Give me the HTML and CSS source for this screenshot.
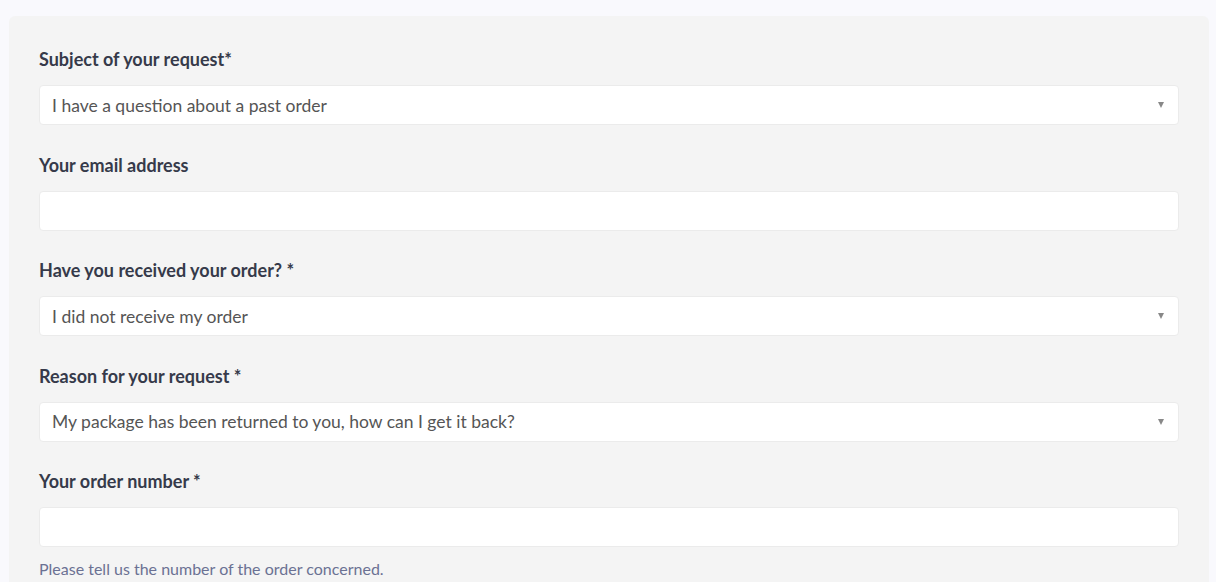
FILE: index.html
```html
<!DOCTYPE html>
<html lang="en">
<head>
    <meta charset="UTF-8">
    <meta name="viewport" content="width=device-width, initial-scale=1.0">
    <title>Contact us</title>
    <link rel="stylesheet" href="styles.css">
</head>
<body>

<div class="card">
    <form class="request-form">
        <div class="field">
            <label for="subject">Subject of your request*</label>
            <div class="select">
                <span>I have a question about a past order</span>
                <span class="arrow"></span>
            </div>
        </div>

        <div class="field">
            <label for="email">Your email address</label>
            <input type="email" id="email">
        </div>

        <div class="field">
            <label for="received">Have you received your order? *</label>
            <div class="select">
                <span>I did not receive my order</span>
                <span class="arrow"></span>
            </div>
        </div>

        <div class="field">
            <label for="reason">Reason for your request *</label>
            <div class="select">
                <span>My package has been returned to you, how can I get it back?</span>
                <span class="arrow"></span>
            </div>
        </div>

        <div class="field">
            <label for="order">Your order number *</label>
            <input type="text" id="order">
            <p class="hint">Please tell us the number of the order concerned.</p>
        </div>
    </form>
</div>

</body>
</html>
```

FILE: styles.css
```css
body {
    font-family: Lato, "Open Sans", sans-serif;
    margin: 0;
    padding: 16px 7px 0 9px;
    background-color: #f9f9fd;
}
.card {
    background-color: #f4f4f4;
    border-radius: 6px;
    padding: 31px 30px 30px 30px;
    min-height: 600px;
}
.field {
    margin-bottom: 27.5px;
}
label {
    display: block;
    font-size: 18px;
    font-weight: 700;
    line-height: 24px;
    color: #363a4a;
    margin-bottom: 14px;
}
input,
.select {
    box-sizing: border-box;
    width: 100%;
    height: 40px;
    background-color: #fff;
    border: 1px solid #ebebeb;
    border-radius: 4px;
    font-family: inherit;
    font-size: 17.5px;
    color: #555;
    padding: 0 12px;
    margin: 0;
    display: flex;
    align-items: center;
    justify-content: space-between;
}
.arrow {
    width: 0;
    height: 0;
    border-left: 3.5px solid transparent;
    border-right: 3.5px solid transparent;
    border-top: 6px solid #888;
    margin-right: 2px;
}
.hint {
    margin: 12px 0 0;
    font-size: 16px;
    color: #6b7193;
}
```
